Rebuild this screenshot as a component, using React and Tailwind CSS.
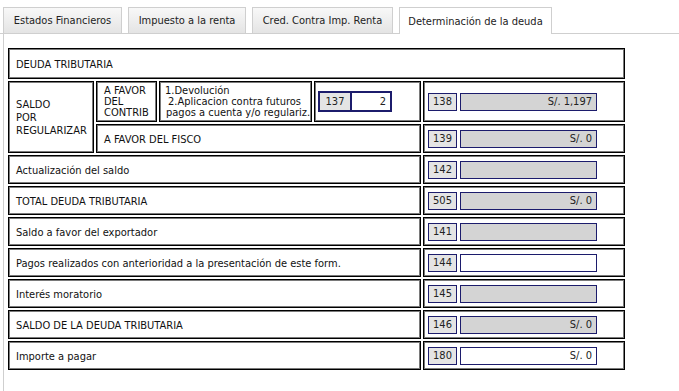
import React from "react";

const NAVY = "border-[#1c1c6c]";
const CELL = "border border-black shadow-[inset_0_0_0_1px_#7a7a7a]";

function Field({ code, value, white }) {
  return (
    <div className="flex items-center gap-[3px]">
      <div className={`w-[29px] h-[18px] border ${NAVY} bg-[#e4e4e4] flex items-center justify-center pt-[1px] text-[#222]`}>
        {code}
      </div>
      <div
        className={`w-[137px] h-[18px] border ${NAVY} flex items-center justify-end pr-[4px] pt-[1px] text-[#222] ${
          white
            ? "bg-white"
            : "bg-[#d4d4d4] bg-[radial-gradient(#c9c9c9_0.5px,transparent_0.7px)] bg-[length:4px_4px]"
        }`}
      >
        {value}
      </div>
    </div>
  );
}

function Row({ label, code, value, white }) {
  return (
    <div className="flex gap-[2px] h-[29px]">
      <div className={`w-[413px] ${CELL} flex items-center pl-[7px] pt-[3px]`}>{label}</div>
      <div className={`flex-1 ${CELL} flex items-center pl-[4px]`}>
        <Field code={code} value={value} white={white} />
      </div>
    </div>
  );
}

function Tab({ label, w, active }) {
  return (
    <div
      className={`${w} flex items-center justify-center pt-[2px] border border-[#cfcfcf] text-[#222] ${
        active
          ? "h-[27px] bg-white border-b-0 -mb-px"
          : "h-[26px] bg-[linear-gradient(#f8f8f8,#e4e4e4)] border-b-0"
      }`}
    >
      {label}
    </div>
  );
}

export default function App() {
  return (
    <div
      className="w-[679px] h-[391px] bg-white overflow-hidden text-[11px] text-[#111]"
      style={{ fontFamily: "'DejaVu Sans Condensed', 'Liberation Sans', sans-serif" }}
    >
      <div className="flex items-end h-[34px] pl-[3px] gap-[6px] border-b border-[#cfcfcf]">
        <Tab label="Estados Financieros" w="w-[119px]" />
        <Tab label="Impuesto a la renta" w="w-[118px]" />
        <Tab label="Cred. Contra Imp. Renta" w="w-[141px]" />
        <Tab label="Determinación de la deuda" w="w-[153px]" active />
      </div>
      <div className="ml-[3px] h-[357px] border-l border-[#cfcfcf] pl-[4px] pt-[14px]">
        <div className="w-[617px] flex flex-col gap-[2px]">
          <div className={`h-[31px] ${CELL} flex items-center pl-[7px] pt-[3px]`}>DEUDA TRIBUTARIA</div>

          <div className="flex gap-[2px] h-[72px]">
            <div className="w-[413px] flex gap-[2px]">
              <div className={`w-[86px] ${CELL} flex items-center pl-[7px] leading-[13px]`}>
                <div>
                  SALDO
                  <br />
                  POR
                  <br />
                  REGULARIZAR
                </div>
              </div>
              <div className="flex-1 flex flex-col gap-[2px]">
                <div className="h-[41px] flex gap-[2px]">
                  <div className={`w-[61px] ${CELL} flex items-center pl-[7px] leading-[11px]`}>
                    <div>
                      A FAVOR
                      <br />
                      DEL
                      <br />
                      CONTRIB
                    </div>
                  </div>
                  <div className={`w-[153px] ${CELL} flex items-center pl-[5px] leading-[11px] whitespace-nowrap`}>
                    <div>
                      1.Devolución
                      <br />
                      <span className="pl-[3px]">2.Aplicacion contra futuros</span>
                      <br />
                      <span className="pl-[1px]">pagos a cuenta y/o regulariz.</span>
                    </div>
                  </div>
                  <div className={`flex-1 ${CELL} flex items-center pl-[3px]`}>
                    <div className={`w-[74px] h-[21px] border-2 ${NAVY} flex`}>
                      <div className={`w-[32px] bg-[#e4e4e4] border-r-2 ${NAVY} flex items-center justify-center pt-[1px] text-[#222]`}>
                        137
                      </div>
                      <div className="flex-1 bg-white flex items-center justify-end pr-[4px] pt-[1px] text-[#222]">2</div>
                    </div>
                  </div>
                </div>
                <div className={`flex-1 ${CELL} flex items-center pl-[7px] pt-[3px]`}>A FAVOR DEL FISCO</div>
              </div>
            </div>
            <div className="flex-1 flex flex-col gap-[2px]">
              <div className={`h-[41px] ${CELL} flex items-center pl-[4px]`}>
                <Field code="138" value="S/. 1,197" />
              </div>
              <div className={`flex-1 ${CELL} flex items-center pl-[4px]`}>
                <Field code="139" value="S/. 0" />
              </div>
            </div>
          </div>

          <Row label="Actualización del saldo" code="142" value="" />
          <Row label="TOTAL DEUDA TRIBUTARIA" code="505" value="S/. 0" />
          <Row label="Saldo a favor del exportador" code="141" value="" />
          <Row label="Pagos realizados con anterioridad a la presentación de este form." code="144" value="" white />
          <Row label="Interés moratorio" code="145" value="" />
          <Row label="SALDO DE LA DEUDA TRIBUTARIA" code="146" value="S/. 0" />
          <Row label="Importe a pagar" code="180" value="S/. 0" white />
        </div>
      </div>
    </div>
  );
}
